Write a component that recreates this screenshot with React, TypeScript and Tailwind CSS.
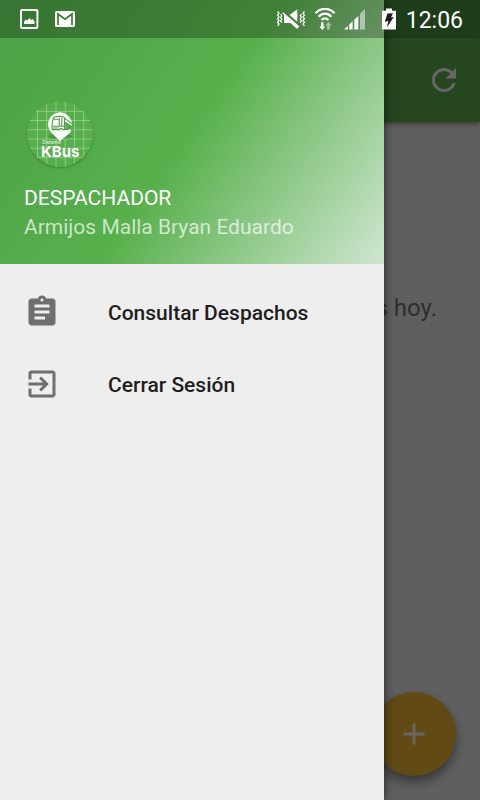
import { MdAdd, MdAssignment, MdExitToApp, MdRefresh } from "react-icons/md";

const menuItems = [
  { label: "Consultar Despachos", icon: MdAssignment },
  { label: "Cerrar Sesión", icon: MdExitToApp },
];

function StatusBar() {
  return (
    <div className="absolute inset-x-0 top-0 flex h-[38px] items-center justify-between pl-5 pr-[17px] text-white">
      <div className="flex items-center gap-4">
        {/* Picture */}
        <svg width="19" height="20" viewBox="0 0 19 20" fill="none">
          <rect x="1" y="1" width="16.4" height="18" rx="1" stroke="currentColor" strokeWidth="2" />
          <path d="M4 15v-2.5l2-2 1.5 1 2-2.5 1.5 2 1.5-1 2 2V15z" fill="currentColor" />
        </svg>
        {/* Gmail */}
        <svg width="20" height="16" viewBox="0 0 20 16" fill="none">
          <rect width="20" height="16" rx="1.5" fill="currentColor" />
          <path d="M3 14V3l7 5.2L17 3v11" stroke="#3b7832" strokeWidth="1.7" />
        </svg>
      </div>

      <div className="flex items-center">
        {/* Muted, vibrating */}
        <svg width="30" height="22" viewBox="0 0 30 22" fill="none">
          <path
            d="M1.5 3.5l1.6 1.8-1.6 1.8 1.6 1.8-1.6 1.8 1.6 1.8-1.6 1.8 1.6 1.8-1.6 1.8M4.6 6.2l1.2 1.6-1.2 1.7 1.2 1.7-1.2 1.7 1.2 1.7M28.5 3.5l-1.6 1.8 1.6 1.8-1.6 1.8 1.6 1.8-1.6 1.8 1.6 1.8-1.6 1.8 1.6 1.8M25.4 6.2l-1.2 1.6 1.2 1.7-1.2 1.7 1.2 1.7-1.2 1.7"
            stroke="currentColor"
            strokeWidth="1.2"
          />
          <path d="M7.2 4.2L23.4 18.4l-1.2 1.4-.7-.6v2L14.3 15H8V6.9l-1.6-1.3zM13.6 6.9L21.3 1.2v12.6z" fill="currentColor" />
        </svg>
        {/* Wifi */}
        <svg className="ml-2" width="22" height="23" viewBox="0 0 22 23" fill="none">
          <path
            d="M1.5 5.2C6.8-.6 15.2-.6 20.5 5.2M4.6 8.7c3.7-4 9.1-4 12.8 0M7.6 12c2-2.2 4.8-2.2 6.8 0"
            stroke="currentColor"
            strokeWidth="2.3"
          />
          <path d="M7 14.2h2.6v4.4h1.6l-2.9 3.6-2.9-3.6H7z" fill="currentColor" />
          <path d="M13 21.6v-4h-1.6l3-3.8 3 3.8h-1.6v4z" fill="currentColor" opacity=".5" />
        </svg>
        {/* Signal */}
        <svg className="ml-2" width="22" height="22" viewBox="0 0 22 22" fill="currentColor">
          <path d="M0 21.5l3.8-3.6v3.6zM5.2 16.5l3.4-3.2v8.2H5.2zM10.3 11.8l4-3.8v13.5h-4z" />
          <path d="M16 5.8L21 1v20.5h-5z" opacity=".5" />
        </svg>
        {/* Battery */}
        <svg className="ml-4" width="14" height="22" viewBox="0 0 14 22" fill="currentColor">
          <path d="M4 0.5h6v2.2h4V21.5H0V2.7h4z" />
          <path d="M5.4 5.5L11 5.2 9 9.5l2.8-.5-7 10.5L6.4 13l-3.6.8z" fill="#1c1c1c" />
        </svg>
        <span className="ml-2.5 pt-[3px] text-[23px] leading-8">12:06</span>
      </div>
    </div>
  );
}

function Logo() {
  return (
    <svg className="block" width="72" height="72" viewBox="0 0 72 72" role="img" aria-label="KBus">
      <defs>
        <clipPath id="disc">
          <circle cx="36" cy="36" r="33" />
        </clipPath>
        <filter id="soft" x="-20%" y="-20%" width="140%" height="140%">
          <feGaussianBlur stdDeviation="0.8" />
        </filter>
      </defs>
      <circle cx="36" cy="37.2" r="32.8" fill="#2f702b" opacity=".7" filter="url(#soft)" />
      <circle cx="36" cy="36" r="33" fill="#57af4b" />
      <path
        d="M13.5 0v72M22.7 0v72M32 0v72M41.2 0v72M50.5 0v72M59.7 0v72M0 13.4h72M0 22.5h72M0 31.7h72M0 41h72M0 50.2h72M0 59.4h72"
        stroke="#d8f0d4"
        strokeWidth=".8"
        opacity=".5"
        clipPath="url(#disc)"
      />
      <ellipse cx="36" cy="38.5" rx="12" ry="2.6" fill="#3f8d38" opacity=".7" />
      <path
        d="M36 43.2L26.8 34A12.2 12.2 0 0 1 24 26.5a12 12 0 0 1 23.6-3.2l.5 4.6-4.5-2.4-3.6-3v8.5h6.8l1-.3-1 3.3z"
        fill="#fff"
      />
      {/* Bus */}
      <path
        d="M29.6 19.6c3-1.4 6.5-1.6 10-.6l1 1.3-.2 11.3h-1.8c-.4-1.6-2.6-1.6-3 0h-7.2l-.4-3c.2-3.2.7-6.3 1.6-9z"
        stroke="#4c9f42"
        strokeWidth="1.1"
        fill="#fff"
      />
      <path
        d="M29.6 21.2h5.6v7h-6.4M35.2 20v8.2h5M37.8 20v8M28.6 30h6M40.6 20.4l3.2 2.2 4 3.2M41 24.8l6.4 3.4M41 31.4h3c.3-2.6 2.8-2.6 3.2 0h1.6"
        stroke="#4c9f42"
        strokeWidth="1.1"
        fill="none"
      />
      <text x="17" y="59" fill="#fff" fontSize="15" fontWeight="700" className="font-['Inter',sans-serif]">
        KBus
      </text>
      <text x="18" y="46" fill="#e4f4e1" fontSize="5" className="font-['Inter',sans-serif]">
        Sistema
      </text>
    </svg>
  );
}

function Drawer() {
  return (
    <aside className="absolute inset-y-0 left-0 w-4/5 bg-[#eeeeee] shadow-[0_0_10px_rgba(0,0,0,0.6)]">
      <div className="relative bg-[linear-gradient(125deg,#4ca046,#58b04c_50%,#cfe6d0)] px-6 pb-[22px] pt-[98px]">
        <div className="absolute inset-x-0 top-0 h-[38px] bg-black/27" />
        <Logo />
        <div className="mt-[14px] text-[21px] leading-[29px]">
          <p className="text-white">DESPACHADOR</p>
          <p className="text-white/70">Armijos Malla Bryan Eduardo</p>
        </div>
      </div>

      <nav className="py-3">
        {menuItems.map(({ label, icon: Icon }) => (
          <button
            key={label}
            className="flex h-[72px] w-full items-center gap-12 px-6 text-left text-[21px] font-medium text-[#1e1e1e]"
          >
            <Icon className="size-9 text-[#6f6f6f]" />
            <span className="pt-[3px]">{label}</span>
          </button>
        ))}
      </nav>
    </aside>
  );
}

export default function App() {
  return (
    <div className="relative flex min-h-screen flex-col overflow-hidden bg-[#eeeeee] font-['Roboto',sans-serif]">
      {/* Despachos screen */}
      <div className="h-[38px] bg-[#4c963f]" />
      <header className="flex h-[84px] items-center justify-end bg-[#5caf4d] px-[18px] shadow-[0_2px_5px_rgba(0,0,0,0.4)]">
        <button aria-label="Actualizar" className="text-white">
          <MdRefresh className="size-9" />
        </button>
      </header>
      <main className="flex-1 px-[43px] pt-[170px] text-right text-2xl text-[#737373]">
        <p>turnos hoy.</p>
      </main>
      <button
        aria-label="Agregar"
        className="absolute bottom-6 right-6 flex size-[84px] items-center justify-center rounded-full bg-[#f3ba33] text-white shadow-[0_6px_12px_rgba(0,0,0,0.45)]"
      >
        <MdAdd className="size-9" />
      </button>

      <div className="absolute inset-0 bg-black/60" />
      <Drawer />
      <StatusBar />
    </div>
  );
}
